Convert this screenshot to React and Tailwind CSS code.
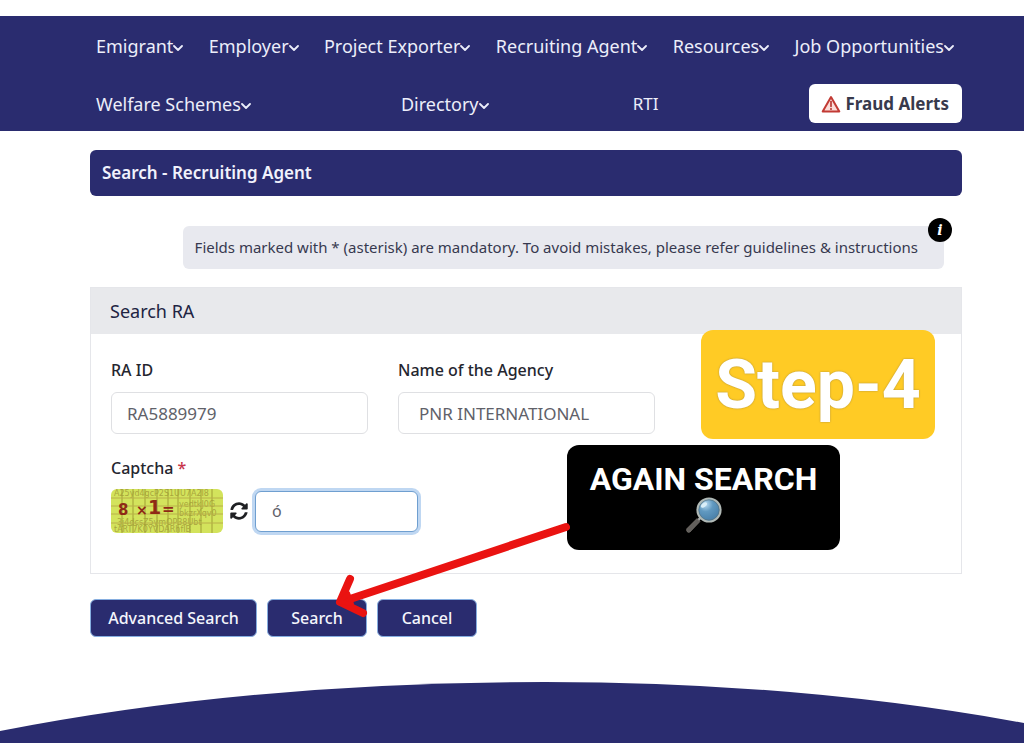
import React, { useState } from "react";
import { FaSyncAlt } from "react-icons/fa";

const mainMenu = [
  "Emigrant",
  "Employer",
  "Project Exporter",
  "Recruiting Agent",
  "Resources",
  "Job Opportunities",
];

function Chevron() {
  return (
    <svg viewBox="0 0 10 6" className="mt-1 w-2.5 h-1.5" fill="none" aria-hidden="true">
      <path
        d="M1 1 L5 5 L9 1"
        stroke="currentColor"
        strokeWidth="1.8"
        strokeLinecap="round"
        strokeLinejoin="round"
      />
    </svg>
  );
}

function MenuItem(props) {
  return (
    <button className="flex items-center px-1.5 text-lg leading-6 whitespace-nowrap">
      {props.label}
      <Chevron />
    </button>
  );
}

function WarningIcon() {
  return (
    <svg viewBox="0 0 20 18" className="w-5 h-[18px]" aria-hidden="true">
      <path
        d="M10 2 L18.3 16.4 H1.7 Z"
        fill="#fbdcd8"
        stroke="#c23a34"
        strokeWidth="2"
        strokeLinejoin="round"
      />
      <path d="M10 6.5 V11.5" stroke="#b5322d" strokeWidth="1.6" strokeLinecap="round" />
      <circle cx="10" cy="14" r="1" fill="#b5322d" />
    </svg>
  );
}

function Header() {
  return (
    <header className="mt-4 bg-[#2a2c6f] text-[#eceefa] text-[17px] leading-6">
      <nav className="pl-[90px] pr-[62px] pt-[18px] pb-2">
        <div className="flex items-center justify-between pr-0.5">
          {mainMenu.map((label) => (
            <MenuItem key={label} label={label} />
          ))}
        </div>
        <div className="flex items-center justify-between mt-[26px]">
          <MenuItem label="Welfare Schemes" />
          <MenuItem label="Directory" />
          <a href="#rti" className="pr-3">
            RTI
          </a>
          <a
            href="#fraud-alerts"
            className="flex items-center gap-[5px] h-[39px] pl-3 pr-[13px] bg-white rounded-md text-[#383a4c] font-bold"
          >
            <WarningIcon />
            Fraud Alerts
          </a>
        </div>
      </nav>
    </header>
  );
}

function CaptchaImage() {
  const noise = [
    { x: 3, y: 7, text: "A25yd4gcP2S1UU7A2I8" },
    { x: 68, y: 18, text: "yedtkJ0G" },
    { x: 68, y: 27, text: "bkzrXqv0" },
    { x: 6, y: 36, text: "3j4dcsZ5ymOP38Ubt" },
    { x: 3, y: 43, text: "tART7K0YVDARhfIB" },
  ];
  const columns = [11, 22, 34, 46, 57, 67, 79, 90, 101];
  const rows = [9, 17, 25, 34];

  return (
    <svg
      viewBox="0 0 112 44"
      className="w-[112px] h-11 rounded-md bg-[#d3e35c]"
      role="img"
      aria-label="Captcha"
    >
      {noise.map((line) => (
        <text
          key={line.text}
          x={line.x}
          y={line.y}
          fontFamily="DejaVu Sans, sans-serif"
          fontSize="8"
          fill="#a9a63c"
        >
          {line.text}
        </text>
      ))}
      {columns.map((x) => (
        <path key={x} d={`M${x} 0 V44`} stroke="#a09f35" strokeWidth="1" />
      ))}
      {rows.map((y) => (
        <path key={y} d={`M0 ${y} H112`} stroke="#b9b048" strokeWidth="1" />
      ))}
      <text x="7" y="26" fill="#8f2a16" fontFamily="DejaVu Sans, sans-serif" fontWeight="bold">
        <tspan fontSize="15">8</tspan>
        <tspan x="25" fontSize="14">×</tspan>
        <tspan x="37" y="25" fontSize="19">1</tspan>
        <tspan x="51" fontSize="15">=</tspan>
      </text>
    </svg>
  );
}

function MagnifierIcon() {
  return (
    <svg viewBox="0 0 36 36" className="w-9 h-9" aria-hidden="true">
      <defs>
        <radialGradient id="lens" cx="0.35" cy="0.25" r="0.8">
          <stop offset="0" stopColor="#b9dcf2" />
          <stop offset="0.4" stopColor="#6199c0" />
          <stop offset="1" stopColor="#447ba5" />
        </radialGradient>
      </defs>
      <path d="M15 20 L11.5 24" stroke="#a3a6a5" strokeWidth="2.5" />
      <path
        d="M11 21.5 L14 24.5 L4 35 Q2.5 36 1 34.5 Q0 33 1 31.5 Z"
        fill="#625f5c"
        stroke="#858079"
        strokeWidth="0.6"
      />
      <circle cx="23" cy="13" r="11.5" fill="url(#lens)" stroke="#b0b9b6" strokeWidth="2.2" />
      <circle cx="23" cy="13" r="10.2" fill="none" stroke="#53707e" strokeWidth="0.7" />
      <ellipse cx="18" cy="8" rx="3.5" ry="2" fill="#d9eef8" transform="rotate(-40 18 8)" />
    </svg>
  );
}

function Arrow() {
  return (
    <svg
      viewBox="0 0 240 100"
      className="absolute left-[240px] top-[390px] w-[240px] h-[100px] z-10 pointer-events-none"
      fill="none"
      stroke="#ea1311"
      strokeLinecap="round"
      strokeLinejoin="round"
      aria-hidden="true"
    >
      <path d="M236 6 L11 81" strokeWidth="8" />
      <path d="M20 58 L10 81 L33 92" strokeWidth="8" />
      <path d="M10 81 L18 72 L22 83 Z" fill="#ea1311" strokeWidth="4" />
    </svg>
  );
}

function App() {
  const [raId, setRaId] = useState("RA5889979");
  const [agency, setAgency] = useState("PNR INTERNATIONAL");
  const [captcha, setCaptcha] = useState("ó");

  return (
    <div className="bg-white overflow-hidden font-['Noto_Sans',sans-serif] text-[#25262f]">
      <Header />

      <main className="relative ml-[90px] mr-[62px] pt-[19px]">
        <h1 className="h-[46px] px-3 flex items-center rounded-md bg-[#2a2c6f] text-[#f1f2fc] text-[17px] font-semibold">
          Search - Recruiting Agent
        </h1>

        <div className="flex justify-end mt-[30px] pr-[18px]">
          <p className="relative h-[43px] pl-3 pr-[26px] flex items-center rounded-md bg-[#e8e9ef] text-[15px] text-[#37394f] whitespace-nowrap">
            Fields marked with * (asterisk) are mandatory. To avoid mistakes, please refer guidelines &amp;
            instructions
            <button
              aria-label="Instructions"
              className="absolute -top-2 -right-2 w-6 h-6 rounded-full bg-black text-white font-['DejaVu_Serif',serif] text-sm leading-6 italic font-bold"
            >
              i
            </button>
          </p>
        </div>

        <section className="mt-[18px] border border-[#e5e6ea]">
          <h2 className="h-[46px] px-[19px] flex items-center bg-[#e8e9ec] text-lg text-[#202342]">
            Search RA
          </h2>
          <form className="h-[239px] px-5 pt-6 text-base">
            <div className="flex gap-[30px]">
              <div className="w-[257px]">
                <label htmlFor="ra-id" className="block leading-6 font-medium">
                  RA ID
                </label>
                <input
                  id="ra-id"
                  value={raId}
                  onChange={(e) => setRaId(e.target.value)}
                  className="w-full h-[42px] mt-2.5 px-[15px] border border-[#dfe0e3] rounded-md text-[17px] text-[#606169]"
                />
              </div>
              <div className="w-[257px]">
                <label htmlFor="agency" className="block leading-6 font-medium">
                  Name of the Agency
                </label>
                <input
                  id="agency"
                  value={agency}
                  onChange={(e) => setAgency(e.target.value)}
                  className="w-full h-[42px] mt-2.5 px-5 border border-[#dfe0e3] rounded-md text-[17px] text-[#606169]"
                />
              </div>
            </div>

            <label htmlFor="captcha" className="block mt-[22px] leading-6 font-medium">
              Captcha <span className="text-[#c8354b]">*</span>
            </label>
            <div className="flex items-center mt-[9px]">
              <CaptchaImage />
              <button type="button" aria-label="Refresh captcha" className="mx-[7px] text-[#1f2023]">
                <FaSyncAlt size="18" />
              </button>
              <input
                id="captcha"
                value={captcha}
                onChange={(e) => setCaptcha(e.target.value)}
                className="w-[163px] h-[41px] px-4 bg-white border border-[#6f9fd0] rounded-md ring-3 ring-[#bfd7f2] text-[#606169]"
              />
            </div>
          </form>
        </section>

        <div className="flex gap-2.5 mt-[25px] text-base font-medium text-[#f4f5fc]">
          <button className="h-[38px] w-[167px] bg-[#2a2c6f] border border-[#86aee0] rounded-md">
            Advanced Search
          </button>
          <button className="h-[38px] w-[100px] bg-[#2a2c6f] border border-[#86aee0] rounded-md">
            Search
          </button>
          <button className="h-[38px] w-[100px] bg-[#2a2c6f] border border-[#86aee0] rounded-md">
            Cancel
          </button>
        </div>

        <div className="absolute left-[611px] top-[199px] w-[234px] h-[109px] flex items-center justify-center rounded-xl bg-[#ffcb25] text-white font-['Roboto',sans-serif] text-[68px] font-bold [text-shadow:0_0_2px_#a58a3c]">
          Step-4
        </div>
        <div className="absolute left-[477px] top-[314px] w-[273px] h-[105px] pt-4 flex flex-col items-center rounded-xl bg-black text-white font-['Roboto',sans-serif] text-[32px] leading-9 font-bold">
          AGAIN SEARCH
          <MagnifierIcon />
        </div>
        <Arrow />
      </main>

      <footer className="mt-[45px]">
        <svg
          viewBox="0 0 1024 61"
          preserveAspectRatio="none"
          className="block w-full h-[61px]"
          aria-hidden="true"
        >
          <path d="M0 49 Q250 0 545 0 Q800 0 1024 41 V61 H0 Z" fill="#2a2c6f" />
        </svg>
      </footer>
    </div>
  );
}

export default App;
